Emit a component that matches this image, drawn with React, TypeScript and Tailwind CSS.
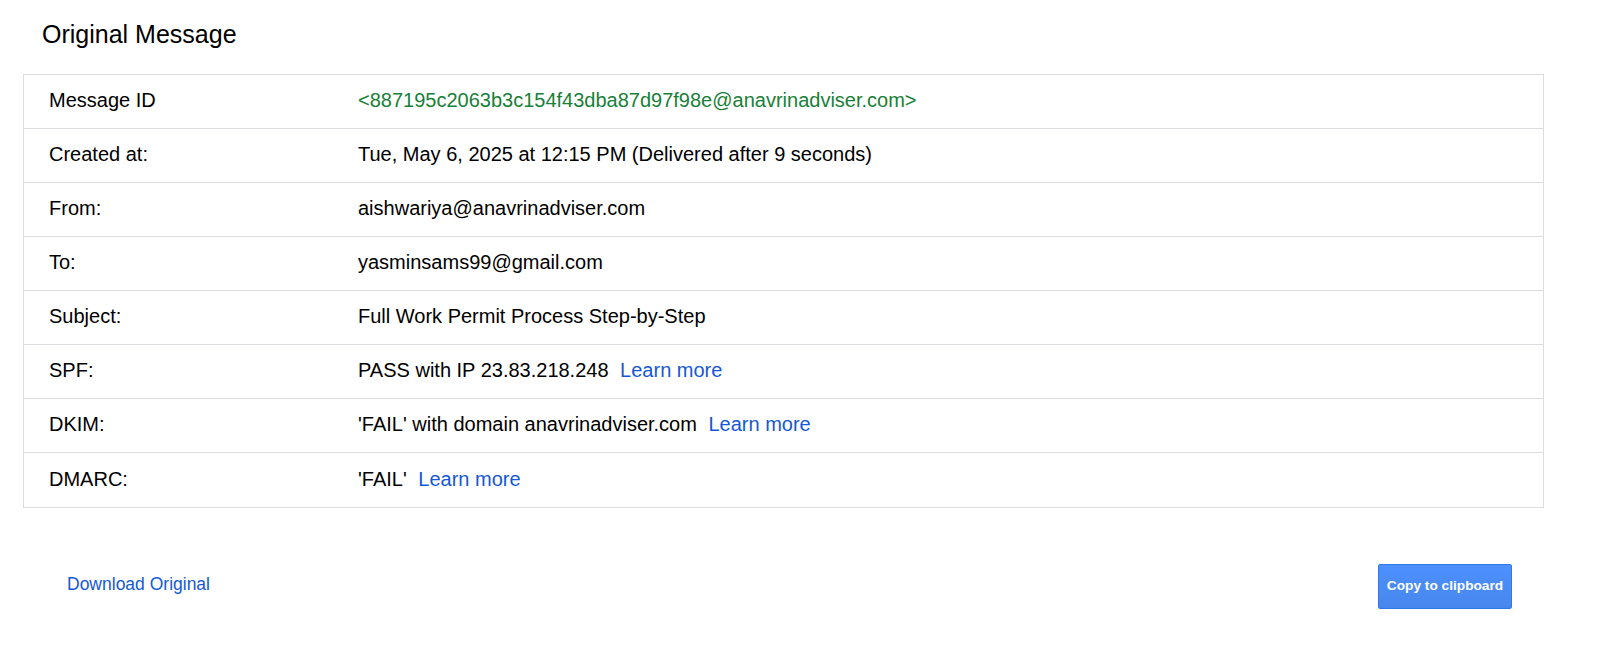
import React from "react";

const rows: { label: string; value: React.ReactNode }[] = [
  {
    label: "Message ID",
    value: <span className="text-[#188038]">&lt;887195c2063b3c154f43dba87d97f98e@anavrinadviser.com&gt;</span>,
  },
  { label: "Created at:", value: "Tue, May 6, 2025 at 12:15 PM (Delivered after 9 seconds)" },
  { label: "From:", value: "aishwariya@anavrinadviser.com" },
  { label: "To:", value: "yasminsams99@gmail.com" },
  { label: "Subject:", value: "Full Work Permit Process Step-by-Step" },
  {
    label: "SPF:",
    value: (
      <>
        PASS with IP 23.83.218.248{" "}
        <a className="ml-[6px] text-[#1558d6]" href="#">Learn more</a>
      </>
    ),
  },
  {
    label: "DKIM:",
    value: (
      <>
        'FAIL' with domain anavrinadviser.com{" "}
        <a className="ml-[6px] text-[#1558d6]" href="#">Learn more</a>
      </>
    ),
  },
  {
    label: "DMARC:",
    value: (
      <>
        'FAIL'{" "}
        <a className="ml-[6px] text-[#1558d6]" href="#">Learn more</a>
      </>
    ),
  },
];

export default function App() {
  return (
    <div
      className="w-[1605px] h-[648px] bg-white text-black"
      style={{ fontFamily: '"Liberation Sans", Arial, sans-serif' }}
    >
      <h1 className="pt-[20px] pl-[42px] text-[25px] leading-[28px] font-normal">Original Message</h1>
      <div className="mt-[26px] ml-[23px] w-[1521px] border border-[#dadce0]">
        {rows.map((r, i) => (
          <div
            key={r.label}
            className={`flex items-center h-[54px] pb-[3px] text-[20px] ${i < rows.length - 1 ? "border-b border-[#dadce0]" : ""}`}
          >
            <div className="w-[334px] pl-[25px] shrink-0">{r.label}</div>
            <div>{r.value}</div>
          </div>
        ))}
      </div>
      <div className="mt-[56px] flex items-center justify-between pl-[67px] pr-[93px]">
        <a href="#" className="mb-[4px] text-[17.5px] text-[#1558d6]">Download Original</a>
        <button className="w-[134px] h-[45px] rounded-[2px] border border-[#3079ed] bg-gradient-to-b from-[#4d90fe] to-[#4787ed] text-white text-[13.7px] font-bold">
          Copy to clipboard
        </button>
      </div>
    </div>
  );
}
